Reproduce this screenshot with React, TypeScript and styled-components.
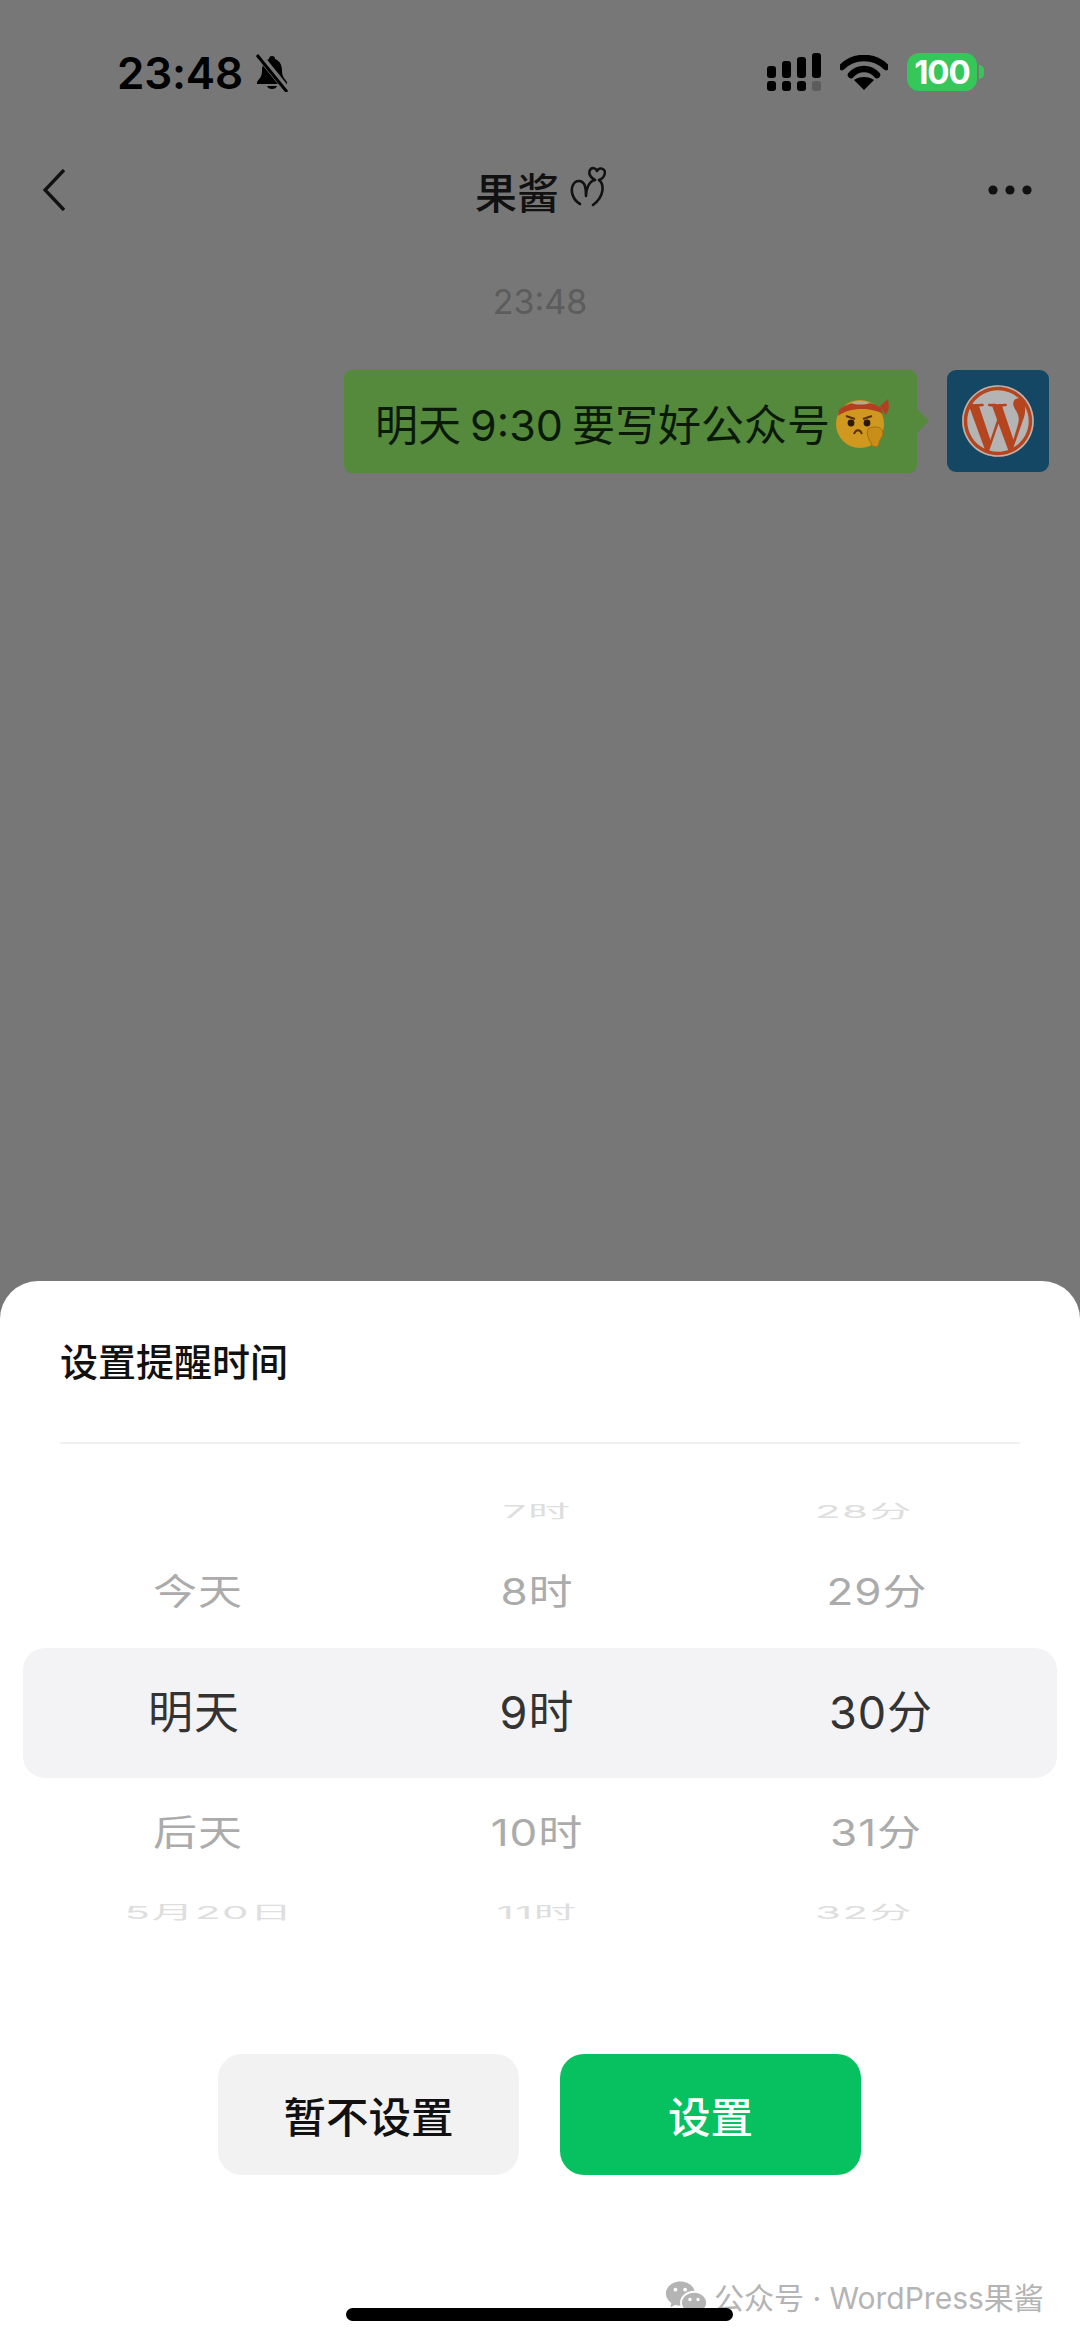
import React from 'react';
import styled, { createGlobalStyle } from 'styled-components';
import { FaWordpress } from 'react-icons/fa';
import { RiWechatFill } from 'react-icons/ri';

const GlobalStyle = createGlobalStyle`
  html, body {
    margin: 0;
    padding: 0;
    background: #777;
    font-family: Inter, "Noto Sans CJK SC", sans-serif;
  }
`;

const Screen = styled.div`
  position: relative;
  width: 1080px;
  height: 2341px;
  overflow: hidden;
  display: flex;
  flex-direction: column;
  background: #777;
`;

const Dimmed = styled.div`
  height: 1281px;
  flex: none;
  display: flex;
  flex-direction: column;
`;

const StatusBar = styled.div`
  height: 147px;
  padding: 50px 103px 0 117px;
  box-sizing: border-box;
  display: flex;
  align-items: flex-start;
  justify-content: space-between;
`;

const StatusLeft = styled.div`
  display: flex;
  align-items: center;
  gap: 11px;
`;

const Clock = styled.span`
  font-size: 44px;
  line-height: 46px;
  font-weight: 600;
  letter-spacing: -0.2px;
  color: #000;
`;

const StatusRight = styled.div`
  display: flex;
  align-items: center;
  gap: 19px;
  margin-top: 3px;
`;

const Battery = styled.div`
  position: relative;
  width: 70px;
  height: 38px;
  border-radius: 12px;
  background: #35c759;
  color: #fff;
  font-size: 33px;
  font-weight: 700;
  line-height: 38px;
  text-align: center;
  letter-spacing: -1px;

  &::after {
    content: '';
    position: absolute;
    right: -7px;
    top: 12px;
    width: 5px;
    height: 14px;
    border-radius: 0 5px 5px 0;
    background: #35c759;
  }
`;

const NavBar = styled.div`
  height: 86px;
  padding: 0 48px 0 43px;
  display: flex;
  align-items: center;
  justify-content: space-between;
`;

const NavTitle = styled.div`
  display: flex;
  align-items: center;
  gap: 11px;
  font-size: 42px;
  font-weight: 500;
  color: #111;
  margin-left: 28px;
`;

const CurlSvg = styled.svg`
  margin-bottom: 8px;
`;

const Stamp = styled.div`
  margin-top: 49px;
  text-align: center;
  font-size: 34px;
  line-height: 40px;
  color: #5c5c5c;
`;

const MessageRow = styled.div`
  margin-top: 48px;
  padding-right: 31px;
  display: flex;
  justify-content: flex-end;
  gap: 30px;
`;

const Bubble = styled.div`
  position: relative;
  width: 573px;
  height: 103px;
  box-sizing: border-box;
  padding-left: 31px;
  border-radius: 8px;
  background: #558a3c;
  display: flex;
  align-items: center;
  gap: 5px;
  font-size: 43px;
  word-spacing: -3px;
  color: #0b1a08;
  white-space: nowrap;

  &::after {
    content: '';
    position: absolute;
    right: -12px;
    top: 39px;
    width: 0;
    height: 0;
    border-left: 12px solid #558a3c;
    border-top: 12px solid transparent;
    border-bottom: 12px solid transparent;
  }
`;

const Avatar = styled.div`
  position: relative;
  width: 102px;
  height: 102px;
  border-radius: 9px;
  background: #134764;
  display: flex;
  align-items: center;
  justify-content: center;
  color: #b4b4b4;

  &::before {
    content: '';
    position: absolute;
    left: 15px;
    top: 15px;
    width: 72px;
    height: 72px;
    border-radius: 50%;
    background: #b5451f;
  }

  svg {
    position: relative;
  }
`;

const Sheet = styled.div`
  flex: 1;
  display: flex;
  flex-direction: column;
  background: #fff;
  border-radius: 38px 38px 0 0;
`;

const SheetTitle = styled.div`
  height: 163px;
  margin: 0 60px;
  box-sizing: border-box;
  padding-top: 58px;
  font-size: 38px;
  line-height: 46px;
  font-weight: 500;
  color: #111;
  border-bottom: 2px solid #f0f0f0;
`;

const Wheel = styled.div`
  margin-top: 28px;
  padding: 0 23px;
  display: flex;
  flex-direction: column;
`;

const WheelRow = styled.div<{ $selected?: boolean; $gapAfter?: number }>`
  height: ${(p) => (p.$selected ? 130 : 80)}px;
  margin-bottom: ${(p) => p.$gapAfter ?? 0}px;
  display: grid;
  grid-template-columns: 344px 340px 350px;
  align-items: center;
  border-radius: 22px;
  background: ${(p) => (p.$selected ? '#f3f3f5' : 'transparent')};
`;

const WheelCell = styled.div<{ $size: number; $color: string; $squash: number; $shift: number; $spacing: number }>`
  text-align: center;
  font-size: ${(p) => p.$size}px;
  line-height: 60px;
  letter-spacing: ${(p) => p.$spacing}px;
  color: ${(p) => p.$color};
  white-space: nowrap;
  transform: translateX(${(p) => p.$shift}px) scaleY(${(p) => p.$squash});
`;

const ButtonRow = styled.div`
  margin-top: 101px;
  display: flex;
  justify-content: center;
  gap: 41px;
  padding-right: 1px;
`;

const ActionButton = styled.button<{ $primary?: boolean }>`
  width: 301px;
  height: 121px;
  border: 0;
  padding: 0;
  border-radius: 24px;
  font-family: inherit;
  font-size: 42.5px;
  font-weight: 500;
  background: ${(p) => (p.$primary ? '#07c160' : '#f2f2f2')};
  color: ${(p) => (p.$primary ? '#fff' : '#111')};
`;

const HomeBar = styled.div`
  position: absolute;
  left: 346px;
  top: 2308px;
  width: 387px;
  height: 13px;
  border-radius: 7px;
  background: #000;
`;

const Watermark = styled.div`
  position: absolute;
  left: 664px;
  top: 2276px;
  display: flex;
  align-items: center;
  gap: 6px;
  font-size: 30px;
  line-height: 44px;
  color: #b4b4b4;
  white-space: nowrap;
`;

type Tone = { size: number; color: string; squash: number; spacing: number };

const tones: Record<string, Tone> = {
  far: { size: 42, color: '#dedede', squash: 0.42, spacing: 1.5 },
  near: { size: 44, color: '#ababab', squash: 0.82, spacing: 1 },
  active: { size: 45, color: '#333', squash: 1, spacing: 1 },
};

const rows: { tone: string; gap?: number; cells: [string, number][] }[] = [
  { tone: 'far', cells: [['', 0], ['7时', 0], ['28分', -18]] },
  { tone: 'near', gap: 16, cells: [['今天', 3], ['8时', 0], ['29分', -5]] },
  { tone: 'active', gap: 15, cells: [['明天', -1], ['9时', 0], ['30分', -1]] },
  { tone: 'near', cells: [['后天', 3], ['10时', 0], ['31分', -6]] },
  { tone: 'far', cells: [['5月20日', 14], ['11时', 0], ['32分', -18]] },
];

function SignalIcon() {
  const top = [[0, 13, 9, 12], [15, 8, 9, 17], [30, 4, 9, 21], [45, 0, 9, 25]];
  const bottom = [0, 15, 30, 45];
  return (
    <svg width="54" height="38" viewBox="0 0 54 38">
      {top.map(([x, y, w, h]) => <rect key={x} x={x} y={y} width={w} height={h} rx="3" fill="#000" />)}
      {bottom.map((x) => <rect key={x} x={x} y="28" width="9" height="10" rx="3" fill={x === 45 ? '#5c5c5c' : '#000'} />)}
    </svg>
  );
}

function WifiIcon() {
  return (
    <svg width="48" height="35" viewBox="0 0 48 35">
      <path d="M2 12 C14 0 34 0 46 12" fill="none" stroke="#000" strokeWidth="6.5" strokeLinecap="round" />
      <path d="M11 20 C18 12 30 12 37 20" fill="none" stroke="#000" strokeWidth="6.5" strokeLinecap="round" />
      <path d="M24 35 L14 25 C19 21 29 21 34 25 Z" fill="#000" />
    </svg>
  );
}

function MutedBell() {
  return (
    <svg width="36" height="38" viewBox="0 0 36 38">
      <path d="M18 2 C20 2 21 3 21 5 C26 7 28 11 28 17 C28 23 31 25 33 28 L33 30 L3 30 L3 28 C5 25 8 23 8 17 C8 11 10 7 15 5 C15 3 16 2 18 2 Z" fill="#000" />
      <path d="M13 32 L23 32 C22 36 14 36 13 32 Z" fill="#000" />
      <path d="M4 0 L34 37" stroke="#777" strokeWidth="7" />
      <path d="M3 1 L33 38" stroke="#000" strokeWidth="3" />
    </svg>
  );
}

function BackIcon() {
  return (
    <svg width="22" height="42" viewBox="0 0 22 42">
      <path d="M21 1 L2 21 L21 41" fill="none" stroke="#111" strokeWidth="3.4" />
    </svg>
  );
}

function MoreIcon() {
  return (
    <svg width="44" height="10" viewBox="0 0 44 10">
      <circle cx="5" cy="5" r="4.6" fill="#111" />
      <circle cx="22" cy="5" r="4.6" fill="#111" />
      <circle cx="39" cy="5" r="4.6" fill="#111" />
    </svg>
  );
}

function TitleCurl() {
  return (
    <CurlSvg width="36" height="42" viewBox="0 0 36 42">
      <path d="M10 39 C3 35 0 26 3 20 C6 14 13 15 15 21 C16 25 16 28 16 31 C16 24 19 16 25 15 C21 13 18 9 20 5 C22 2 26 3 27 6 C29 2 34 3 35 7 C35 11 32 14 29 15 C34 19 35 31 23 40" fill="none" stroke="#111" strokeWidth="2.6" strokeLinecap="round" strokeLinejoin="round" />
    </CurlSvg>
  );
}

function HeadbandEmoji() {
  return (
    <svg width="54" height="56" viewBox="0 0 54 54">
      <ellipse cx="25" cy="29" rx="24" ry="24" fill="#d0981f" />
      <path d="M4 15 C14 5 36 5 46 13 L48 19 C36 12 14 12 3 21 Z" fill="#b23f22" />
      <path d="M16 8 C22 5 30 6 35 8 C30 10 21 10 16 8 Z" fill="#b8a98a" />
      <path d="M45 11 L53 4 L54 13 L51 20 Z" fill="#b23f22" />
      <circle cx="16" cy="28" r="3.4" fill="#2a1a08" />
      <circle cx="32" cy="28" r="3.4" fill="#2a1a08" />
      <path d="M11 21 L20 24 M37 21 L28 24" stroke="#5a300a" strokeWidth="2" />
      <path d="M19 39 C21 34 25 34 27 39" fill="none" stroke="#5a300a" strokeWidth="2" />
      <path d="M33 34 C39 30 48 32 48 38 C48 43 44 44 44 48 C44 53 37 53 36 48 C34 44 31 40 33 34 Z" fill="#c98d1a" stroke="#a56f12" strokeWidth="1" />
    </svg>
  );
}

export default function App() {
  return (
    <>
      <GlobalStyle />
      <Screen>
        <Dimmed>
          <StatusBar>
            <StatusLeft>
              <Clock>23:48</Clock>
              <MutedBell />
            </StatusLeft>
            <StatusRight>
              <SignalIcon />
              <WifiIcon />
              <Battery>100</Battery>
            </StatusRight>
          </StatusBar>
          <NavBar>
            <BackIcon />
            <NavTitle>果酱<TitleCurl /></NavTitle>
            <MoreIcon />
          </NavBar>
          <Stamp>23:48</Stamp>
          <MessageRow>
            <Bubble>
              明天 9:30 要写好公众号
              <HeadbandEmoji />
            </Bubble>
            <Avatar><FaWordpress size={74} /></Avatar>
          </MessageRow>
        </Dimmed>
        <Sheet>
          <SheetTitle>设置提醒时间</SheetTitle>
          <Wheel>
            {rows.map((row, i) => {
              const tone = tones[row.tone];
              return (
                <WheelRow key={i} $selected={row.tone === 'active'} $gapAfter={row.gap}>
                  {row.cells.map(([text, shift], j) => (
                    <WheelCell
                      key={j}
                      $size={tone.size}
                      $color={tone.color}
                      $squash={tone.squash}
                      $spacing={tone.spacing}
                      $shift={shift}
                    >
                      {text}
                    </WheelCell>
                  ))}
                </WheelRow>
              );
            })}
          </Wheel>
          <ButtonRow>
            <ActionButton>暂不设置</ActionButton>
            <ActionButton $primary>设置</ActionButton>
          </ButtonRow>
        </Sheet>
        <Watermark>
          <RiWechatFill size={44} />
          公众号 · WordPress果酱
        </Watermark>
        <HomeBar />
      </Screen>
    </>
  );
}
